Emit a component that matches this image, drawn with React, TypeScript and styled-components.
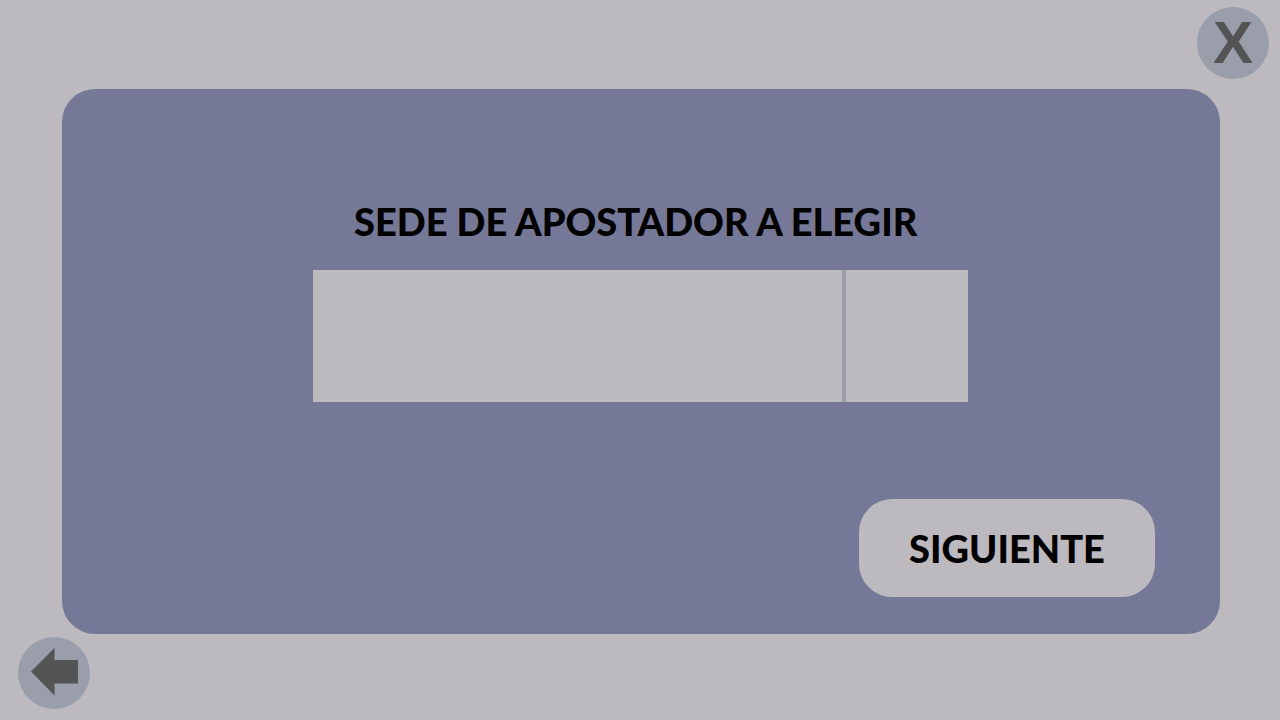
import React from "react";
import styled, { createGlobalStyle } from "styled-components";

const colors = {
  page: "#bcb9bf",
  panel: "#757997",
  accent: "#9a9eab",
  icon: "#545454",
  text: "#000000",
};

const GlobalStyle = createGlobalStyle`
  *, *::before, *::after { box-sizing: border-box; }
  body {
    margin: 0;
    background: ${colors.page};
    color: ${colors.text};
    font-family: Lato, "Liberation Sans", sans-serif;
  }
`;

const Screen = styled.div`
  display: flex;
  flex-direction: column;
  min-height: 100vh;
`;

const Bar = styled.div<{ $align: "start" | "end" }>`
  display: flex;
  justify-content: flex-${(p) => p.$align};
  padding: ${(p) => (p.$align === "end" ? "7px 11px 10px" : "3px 18px 11px")};
`;

const RoundButton = styled.button`
  display: flex;
  align-items: center;
  justify-content: center;
  width: 72px;
  height: 72px;
  padding: 0;
  border: 0;
  border-radius: 50%;
  background: ${colors.accent};
  color: ${colors.icon};
  font: 700 60px/72px "Liberation Sans", sans-serif;
  cursor: pointer;
`;

const Panel = styled.form`
  display: flex;
  flex: 1;
  flex-direction: column;
  justify-content: space-between;
  margin: 0 60px 0 62px;
  padding: 108px 65px 37px 64px;
  border-radius: 33px;
  background: ${colors.panel};
`;

const Field = styled.div`
  display: flex;
  flex-direction: column;
  align-self: center;
  gap: 25px;
  width: 100%;
  max-width: 655px;
`;

const Label = styled.label`
  padding-left: 41px;
  font-size: 38px;
  font-weight: 900;
  line-height: 48px;
`;

const SelectBox = styled.div`
  display: grid;
  grid-template-columns: 1fr 126px;
  height: 132px;
  background: ${colors.page};

  &::after {
    content: "";
    grid-area: 1 / 2;
    border-left: 4px solid ${colors.accent};
    pointer-events: none;
  }
`;

const Select = styled.select`
  grid-area: 1 / 1 / 2 / 3;
  width: 100%;
  padding: 0 150px 0 41px;
  border: 0;
  border-radius: 0;
  appearance: none;
  background: transparent;
  color: ${colors.text};
  font: inherit;
  font-size: 38px;
`;

const NextButton = styled.button`
  align-self: flex-end;
  width: 296px;
  height: 98px;
  padding: 0;
  border: 0;
  border-radius: 33px;
  background: ${colors.page};
  color: ${colors.text};
  font: inherit;
  font-size: 38px;
  font-weight: 900;
  line-height: 48px;
  cursor: pointer;
`;

export default function App() {
  return (
    <Screen>
      <GlobalStyle />
      <Bar $align="end">
        <RoundButton type="button">X</RoundButton>
      </Bar>
      <Panel onSubmit={(event) => event.preventDefault()}>
        <Field>
          <Label htmlFor="sede">SEDE DE APOSTADOR A ELEGIR</Label>
          <SelectBox>
            <Select id="sede" defaultValue="">
              <option value="" />
            </Select>
          </SelectBox>
        </Field>
        <NextButton type="submit">SIGUIENTE</NextButton>
      </Panel>
      <Bar $align="start">
        <RoundButton type="button" aria-label="Volver">
          <svg width="72" height="72" viewBox="0 0 72 72" aria-hidden="true">
            <path d="M13 34.5 36.5 11v12H60v23.500H36.500v12Z" fill="currentColor" />
          </svg>
        </RoundButton>
      </Bar>
    </Screen>
  );
}
